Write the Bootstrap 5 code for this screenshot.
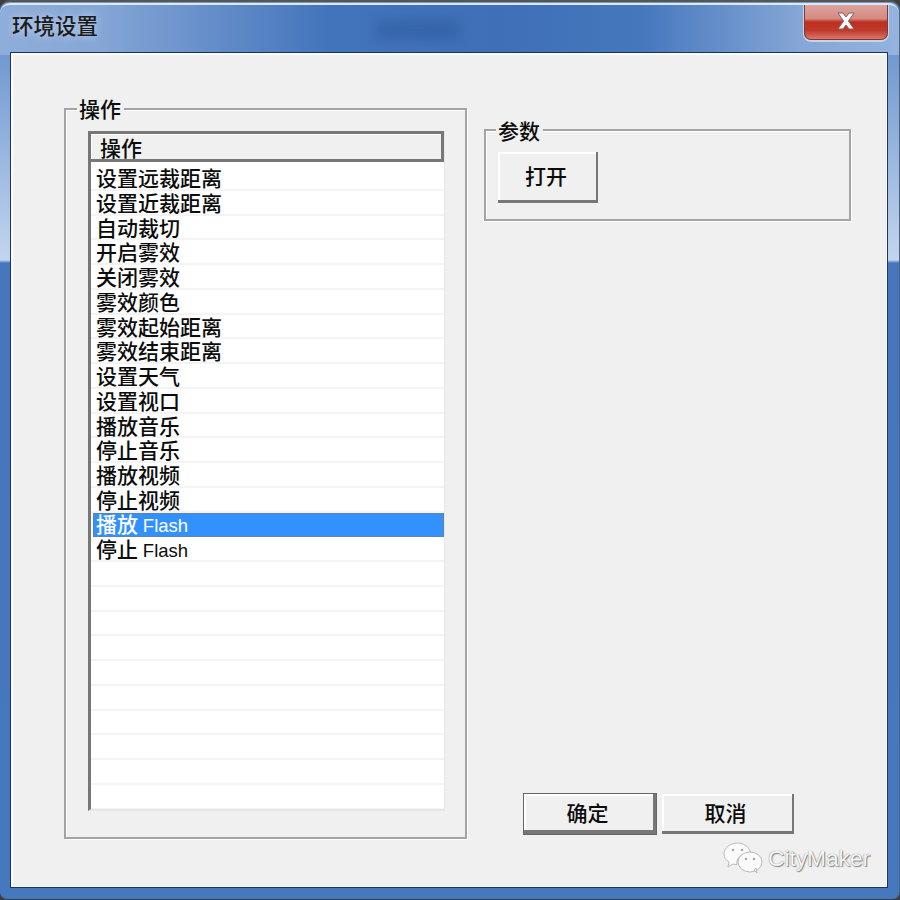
<!DOCTYPE html>
<html>
<head>
    <meta charset='utf-8'>
    <title>环境设置</title>
    <link href="https://cdn.jsdelivr.net/npm/bootstrap@5.3.6/dist/css/bootstrap.min.css" rel="stylesheet">
    <style>
        html, body { width: 900px; height: 900px; overflow: hidden; }
        body { background: #3d3d3d; font-family: "Liberation Sans", "Noto Sans CJK SC", sans-serif; font-weight: 500; color: #0c0c0c; font-size: 21px; }
        .win-frame {
            width: 900px; height: 899px; padding: 4px 11px 0 11px; position: relative;
            background: linear-gradient(to bottom, #6f98d0 50px, #c2d5ee 258px, #4677bd 261px, #4678be 100%);
            border-top: 2px solid #555; border-right: 1px solid #50627e;
            border-radius: 10px 10px 7px 7px;
        }
        .title-strip {
            position: absolute; left: 0; top: 1px; right: 0; height: 52px; border-top: 2px solid #dfe9f5;
            border-radius: 10px 10px 0 0;
            background: linear-gradient(to right, #8fadda 0, #85a6d6 100px, #4274bb 330px, #3f70b7 500px, #4577bd 640px, #85a6d6 800px, #94b3de 900px);
        }
        .title-text { position: absolute; left: 12px; top: 8px; font-size: 21.500px; line-height: 28px; color: #1c1c1c; text-shadow: 0 0 8px rgba(255,255,255,.6); }
        .title-ghost { position: absolute; left: 376px; top: 15px; width: 84px; height: 20px; background: #2e5c9f; opacity: .6; filter: blur(6px); }
        .close-x {
            position: absolute; right: 11px; top: 0; width: 84px; height: 35px; padding-bottom: 3px;
            border: 1px solid #7d3a35; border-top: 0; border-radius: 0 0 7px 7px; box-shadow: 0 1px 0 1px #c9d5e6;
            background: linear-gradient(to bottom, #dca49f 0, #d38a80 40%, #bd2f1f 50%, #c03a2b 75%, #d9776b 100%);
        }
        .client {
            position: relative; margin-top: 47px; width: 876px; height: 834px; background: #f0f0f0;
            outline: 1px solid #1d3557; box-shadow: inset 0 1px 0 #fff, inset 1px 0 0 #fff; border: 1px solid #f8f8f8;
        }
        .grp { position: relative; border: 2px solid #a4a4a4; box-shadow: 1px 1px 0 #fff, inset 1px 1px 0 #fff; }
        .grp-left { width: 403px; height: 731px; margin: 54px 0 0 52px; padding: 21px 20px 26px 22px; }
        .grp-right { width: 367px; height: 92px; padding: 21px 12px; }
        .grp-label { position: absolute; top: -13px; left: 11px; padding: 0 3px 0 2px; background: #f0f0f0; line-height: 26px; }
        .grp-right .grp-label { top: -12px; left: 10px; }
        .side-col { height: 705px; margin: 75px 0 0 17px; }
        .list-box { height: 680px; background: #fff; border-left: 3px solid #777; border-right: 1px solid #e6e6e6; border-bottom: 2px solid #e6e6e6; display: flex; flex-direction: column; overflow: hidden; }
        .list-head {
            height: 31px; margin-left: -3px; background: #f0f0f0; border: 3px solid #777; flex: none;
            padding-left: 9px; line-height: 30px; box-shadow: inset 1px 1px 0 #fff;
        }
        .list-row { height: 24.750px; flex: none; padding: 1px 0 0 5px; line-height: 24px; border-bottom: 2px solid #f4f4f4; white-space: nowrap; }
        .list-row.first-row { margin-top: 4px; }
        .list-row.sel { background: #3391ff; color: #fff; margin-left: 2px; padding: 0 0 0 3px; border: 0; outline: 1px dotted #8a7a5a; outline-offset: -1px; }
        .latin { font-size: 18.500px; margin-left: -1px; }
        .win-btn {
            background: #f0f0f0; border: 0; padding: 0; color: #0c0c0c; font-size: 21px; font-weight: 500; line-height: 1;
            box-shadow: inset -2px -3px 0 #777, inset 2px 2px 0 #fff;
        }
        .btn-open { width: 100px; height: 51px; padding: 0 4px 2px 0; }
        .btn-act { width: 132px; height: 40px; padding: 0 5px 2px 0; }
        .btn-ok { box-shadow: 0 0 0 1px #666, inset -3px -4px 0 #777, inset 2px 2px 0 #fff; }
        .action-row { margin-left: 40px; gap: 6px; }
        .mark-wrap { position: absolute; left: 711px; bottom: 12px; }
        .mark-text { margin-left: 1px; color: #f8f8f8; font-size: 22.700px; font-weight: 400; line-height: 1; font-family: "Liberation Sans", sans-serif; text-shadow: 0 0 1px #666, 1px 1px 1px #888; }
    </style>
</head>
<body>
    <div class="win-frame">
        <div class="title-strip">
            <div class="title-ghost"></div>
            <div class="title-text">环境设置</div>
            <div class="close-x d-flex align-items-center justify-content-center">
                <svg width="20" height="18" viewBox="0 0 20 18"><path d="M2 1h5l3 4 3-4h5l-5.500 8 5.500 8h-5l-3-4-3 4H2l5.500-8z" fill="#fff" stroke="#8a5a55" stroke-width="1"/></svg>
            </div>
        </div>
        <div class="client">
            <div class="d-flex">
                <div class="grp grp-left">
                    <span class="grp-label">操作</span>
                    <div class="list-box" id="listBox">
                        <div class="list-head">操作</div>
                    </div>
                </div>
                <div class="side-col d-flex flex-column justify-content-between">
                    <div class="grp grp-right">
                        <span class="grp-label">参数</span>
                        <button type="button" class="win-btn btn-open">打开</button>
                    </div>
                    <div class="action-row d-flex">
                        <button type="button" class="win-btn btn-act btn-ok">确定</button>
                        <button type="button" class="win-btn btn-act">取消</button>
                    </div>
                </div>
            </div>
            <div class="mark-wrap d-flex align-items-center gap-1">
                <svg width="40" height="32" viewBox="0 0 40 32">
                    <path d="M15 1C7 1 1 6 1 12c0 4 2 6 5 8l-1 5 5-3c1 .5 3 .5 4 .5C13 16 18 11 28 11 26 5 21 1 15 1z" fill="#fbfbfb" stroke="#bbb"/>
                    <ellipse cx="27" cy="20" rx="12" ry="10" fill="#fbfbfb" stroke="#bbb"/>
                    <path d="M31 28l3 3-1-5z" fill="#fbfbfb" stroke="#bbb"/>
                    <circle cx="10" cy="8" r="1.300" fill="#aaa"/><circle cx="19" cy="8" r="1.300" fill="#aaa"/>
                    <circle cx="23" cy="17" r="1.300" fill="#aaa"/><circle cx="31" cy="17" r="1.300" fill="#aaa"/>
                </svg>
                <span class="mark-text">CityMaker</span>
            </div>
        </div>
    </div>
    <script>
        const items = ["设置远裁距离","设置近裁距离","自动裁切","开启雾效","关闭雾效","雾效颜色","雾效起始距离","雾效结束距离","设置天气","设置视口","播放音乐","停止音乐","播放视频","停止视频","播放 <span class='latin'>Flash</span>","停止 <span class='latin'>Flash</span>"];
        const box = document.getElementById("listBox");
        for (let i = 0; i < 26; i++) {
            const row = document.createElement("div");
            row.className = "list-row" + (i === 0 ? " first-row" : "") + (i === 14 ? " sel" : "");
            row.innerHTML = items[i] || "";
            box.appendChild(row);
        }
    </script>
    <script src="https://cdn.jsdelivr.net/npm/bootstrap@5.3.6/dist/js/bootstrap.bundle.min.js"></script>
</body>
</html>
